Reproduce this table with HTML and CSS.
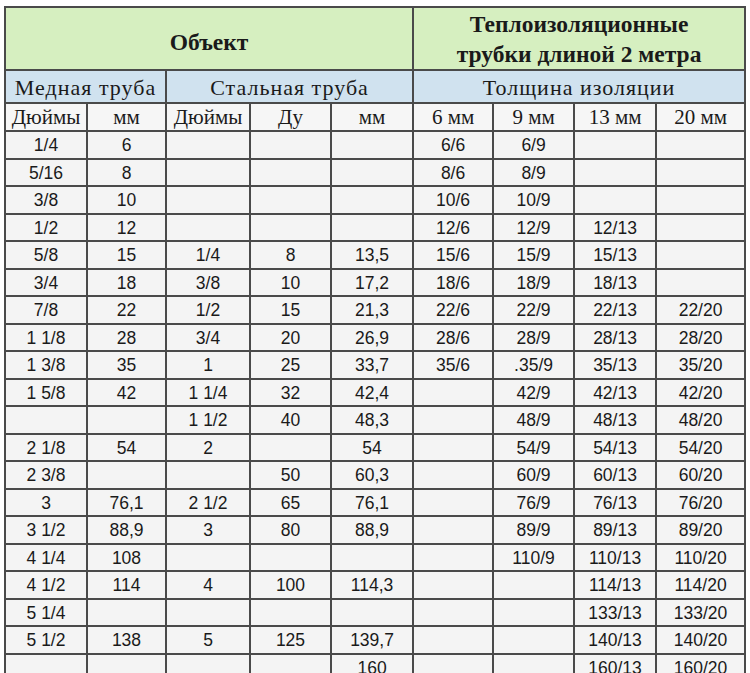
FILE: index.html
```html
<!DOCTYPE html>
<html lang="ru">
<head>
<meta charset="utf-8">
<title>Теплоизоляционные трубки</title>
<link rel="stylesheet" href="styles.css">
</head>
<body>
<table class="grid">
  <colgroup>
    <col class="c1"><col class="c2"><col class="c3"><col class="c4"><col class="c5">
    <col class="c6"><col class="c7"><col class="c8"><col class="c9">
  </colgroup>
  <thead>
    <tr class="row-green">
      <th colspan="5" class="obj">Объект</th>
      <th colspan="4" class="tubes">Теплоизоляционные<br>трубки длиной 2 метра</th>
    </tr>
    <tr class="row-blue">
      <th colspan="2">Медная труба</th>
      <th colspan="3">Стальная труба</th>
      <th colspan="4">Толщина изоляции</th>
    </tr>
    <tr class="row-sub">
      <th>Дюймы</th><th>мм</th><th>Дюймы</th><th>Ду</th><th>мм</th>
      <th>6 мм</th><th>9 мм</th><th>13 мм</th><th>20 мм</th>
    </tr>
  </thead>
  <tbody>
    <tr><td>1/4</td><td>6</td><td></td><td></td><td></td><td>6/6</td><td>6/9</td><td></td><td></td></tr>
    <tr><td>5/16</td><td>8</td><td></td><td></td><td></td><td>8/6</td><td>8/9</td><td></td><td></td></tr>
    <tr><td>3/8</td><td>10</td><td></td><td></td><td></td><td>10/6</td><td>10/9</td><td></td><td></td></tr>
    <tr><td>1/2</td><td>12</td><td></td><td></td><td></td><td>12/6</td><td>12/9</td><td>12/13</td><td></td></tr>
    <tr><td>5/8</td><td>15</td><td>1/4</td><td>8</td><td>13,5</td><td>15/6</td><td>15/9</td><td>15/13</td><td></td></tr>
    <tr><td>3/4</td><td>18</td><td>3/8</td><td>10</td><td>17,2</td><td>18/6</td><td>18/9</td><td>18/13</td><td></td></tr>
    <tr><td>7/8</td><td>22</td><td>1/2</td><td>15</td><td>21,3</td><td>22/6</td><td>22/9</td><td>22/13</td><td>22/20</td></tr>
    <tr><td>1 1/8</td><td>28</td><td>3/4</td><td>20</td><td>26,9</td><td>28/6</td><td>28/9</td><td>28/13</td><td>28/20</td></tr>
    <tr><td>1 3/8</td><td>35</td><td>1</td><td>25</td><td>33,7</td><td>35/6</td><td>.35/9</td><td>35/13</td><td>35/20</td></tr>
    <tr><td>1 5/8</td><td>42</td><td>1 1/4</td><td>32</td><td>42,4</td><td></td><td>42/9</td><td>42/13</td><td>42/20</td></tr>
    <tr><td></td><td></td><td>1 1/2</td><td>40</td><td>48,3</td><td></td><td>48/9</td><td>48/13</td><td>48/20</td></tr>
    <tr><td>2 1/8</td><td>54</td><td>2</td><td></td><td>54</td><td></td><td>54/9</td><td>54/13</td><td>54/20</td></tr>
    <tr><td>2 3/8</td><td></td><td></td><td>50</td><td>60,3</td><td></td><td>60/9</td><td>60/13</td><td>60/20</td></tr>
    <tr><td>3</td><td>76,1</td><td>2 1/2</td><td>65</td><td>76,1</td><td></td><td>76/9</td><td>76/13</td><td>76/20</td></tr>
    <tr><td>3 1/2</td><td>88,9</td><td>3</td><td>80</td><td>88,9</td><td></td><td>89/9</td><td>89/13</td><td>89/20</td></tr>
    <tr><td>4 1/4</td><td>108</td><td></td><td></td><td></td><td></td><td>110/9</td><td>110/13</td><td>110/20</td></tr>
    <tr><td>4 1/2</td><td>114</td><td>4</td><td>100</td><td>114,3</td><td></td><td></td><td>114/13</td><td>114/20</td></tr>
    <tr><td>5 1/4</td><td></td><td></td><td></td><td></td><td></td><td></td><td>133/13</td><td>133/20</td></tr>
    <tr><td>5 1/2</td><td>138</td><td>5</td><td>125</td><td>139,7</td><td></td><td></td><td>140/13</td><td>140/20</td></tr>
    <tr><td></td><td></td><td></td><td></td><td>160</td><td></td><td></td><td>160/13</td><td>160/20</td></tr>
  </tbody>
</table>
</body>
</html>
```
FILE: styles.css
```css
html, body {
  margin: 0;
  padding: 0;
  background: #ffffff;
}
body {
  padding: 6px 0 0 4px;
  overflow: hidden;
}
.grid {
  border-collapse: collapse;
  table-layout: fixed;
  width: 742px;
  color: #1a1a1a;
}
.c1 { width: 82px; }
.c2 { width: 79px; }
.c3 { width: 84px; }
.c4 { width: 81px; }
.c5 { width: 82px; }
.c6 { width: 80px; }
.c7 { width: 81px; }
.c8 { width: 82px; }
.c9 { width: 89px; }

.grid th, .grid td {
  border: 2px solid #4a4a4a;
  padding: 0;
  text-align: center;
  vertical-align: middle;
  overflow: hidden;
  white-space: nowrap;
}
.row-green th {
  background: #d6efc0;
  font-family: "Liberation Serif", "Times New Roman", serif;
  font-weight: bold;
  font-size: 23.5px;
  line-height: 30px;
  height: 61px;
}
.row-green .obj {
  padding-top: 6px;
  height: 55px;
}
.row-blue th {
  background: #d0e2ef;
  font-family: "Liberation Serif", "Times New Roman", serif;
  font-weight: normal;
  font-size: 22px;
  line-height: 26px;
  letter-spacing: 1px;
  height: 29px;
  padding-top: 2px;
}
.row-sub th {
  background: #f6f6f6;
  font-family: "Liberation Serif", "Times New Roman", serif;
  font-weight: normal;
  font-size: 21px;
  line-height: 24px;
  height: 26px;
}
.grid td {
  background: #f4f4f4;
  font-family: "Liberation Sans", Arial, sans-serif;
  font-size: 17.5px;
  height: 24.5px;
  line-height: 20px;
  padding-top: 1px;
}
```
